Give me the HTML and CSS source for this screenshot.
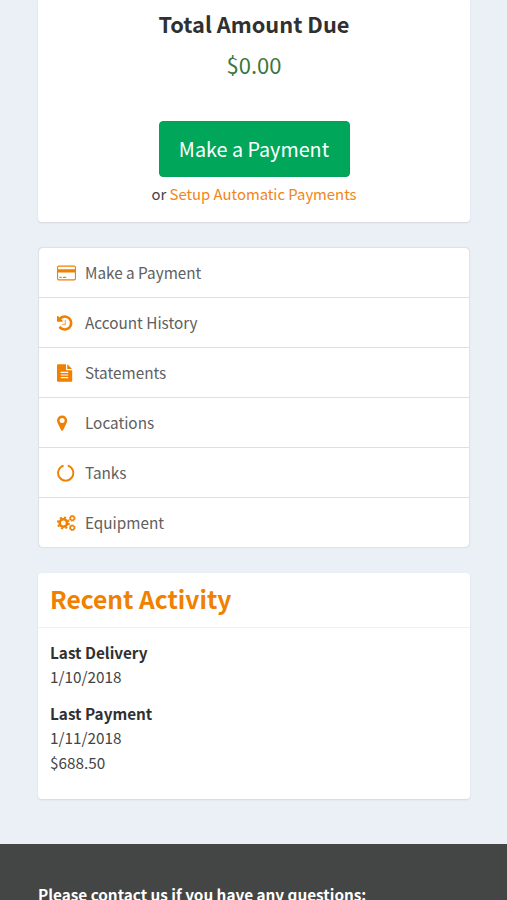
FILE: index.html
```html
<!DOCTYPE html>
<html lang="en">
<head>
<meta charset="utf-8">
<title>Account</title>
<link rel="stylesheet" href="styles.css">
</head>
<body>
<main class="content">
  <section class="card due">
    <h2 class="due-title">Total Amount Due</h2>
    <p class="due-amount">$0.00</p>
    <a class="pay-button"><span>Make a Payment</span></a>
    <p class="autopay">or <a class="link">Setup Automatic Payments</a></p>
  </section>
  <nav class="menu">
    <a class="item"><svg class="icon" viewBox="0 0 20 18"><path fill-rule="evenodd" d="M1.800 1.500h15.400a1.800 1.800 0 0 1 1.800 1.800v11.400a1.800 1.800 0 0 1-1.800 1.800H1.800a1.800 1.800 0 0 1-1.800-1.800V3.300a1.800 1.800 0 0 1 1.800-1.800zm0 1.200a.7.7 0 0 0-.7.8v1.700h16.800V3.500a.7.7 0 0 0-.7-.8zM1.100 8.500v6a.8.8 0 0 0 .8.8h15.200a.8.8 0 0 0 .8-.8v-6zM2.500 12.700h2.200v1.200H2.500zM6 12.700h3.200v1.200H6z"/></svg><span>Make a Payment</span></a>
    <a class="item"><svg class="icon" viewBox="128 0 1991 1792"><path d="M1664 896q0 156-61 298t-164 245-245 164-298 61q-172 0-327-72.500t-264-204.500q-7-10-6.500-22.500t8.500-20.500l137-138q10-9 25-9 16 2 23 12 73 95 179 147t225 52q104 0 198.500-40.500t163.500-109.500 109.500-163.500 40.500-198.500-40.500-198.500-109.500-163.500-163.500-109.500-198.500-40.500q-98 0-188 35.500t-160 101.500l137 138q31 30 14 69-17 40-59 40h-448q-26 0-45-19t-19-45v-448q0-42 40-59 39-17 69 14l130 129q107-101 244.500-156.500t284.500-55.500q156 0 298 61t245 164 164 245 61 298z"/><path class="hand" d="M1024 608v448q0 14-9 23t-23 9h-320q-14 0-23-9t-9-23v-64q0-14 9-23t23-9h224v-352q0-14 9-23t23-9h64q14 0 23 9t9 23z"/></svg><span>Account History</span></a>
    <a class="item"><svg class="icon" viewBox="0 0 20 18"><path fill-rule="evenodd" d="M1 .3h8v4.900a1 1 0 0 0 1 1h5.200v10.500a1 1 0 0 1-1 1H1a1 1 0 0 1-1-1V1.300a1 1 0 0 1 1-1zM3.700 7.800V9h7.500V7.800zm0 2.600v1.200h7.500v-1.200zm0 2.600v1.200h7.500V13z"/><path d="M10.200.4q.5.100.9.500l3.300 3.300q.4.400.5.900h-4.700z"/></svg><span>Statements</span></a>
    <a class="item"><svg class="icon" viewBox="0 0 20 18"><path fill-rule="evenodd" d="M5.100 1.500a5.100 5.100 0 0 1 5.100 5.100q0 1.200-.4 2L6.200 16a1.250 1.250 0 0 1-2.200 0L.4 8.600Q0 7.800 0 6.600a5.100 5.100 0 0 1 5.100-5.100zm0 2.600a2.500 2.500 0 1 0 0 5 2.500 2.500 0 0 0 0-5z"/></svg><span>Locations</span></a>
    <a class="item"><svg class="icon" viewBox="0 0 20 18"><path class="ring" d="M6.600 1.700A7.600 7.600 0 1 0 10.800 1.700"/></svg><span>Tanks</span></a>
    <a class="item"><svg class="icon" viewBox="0 0 20 18"><circle class="gear" cx="6.400" cy="9" r="3.700"/><circle class="teeth" cx="6.400" cy="9" r="5.600"/><circle class="gear-small" cx="15.300" cy="4.300" r="2"/><circle class="teeth-small" cx="15.300" cy="4.300" r="2.900"/><circle class="gear-small" cx="15.300" cy="13.700" r="2"/><circle class="teeth-small" cx="15.300" cy="13.700" r="2.900"/></svg><span>Equipment</span></a>
  </nav>
  <section class="card activity">
    <h2 class="activity-title">Recent Activity</h2>
    <dl class="activity-list">
      <dt>Last Delivery</dt>
      <dd>1/10/2018</dd>
      <dt>Last Payment</dt>
      <dd>1/11/2018</dd>
      <dd>$688.50</dd>
    </dl>
  </section>
</main>
<footer class="footer">Please contact us if you have any questions:</footer>
</body>
</html>
```
FILE: styles.css
```css
* { box-sizing: border-box; }
html { height: 100%; overflow: hidden; }
body {
  margin: 0;
  height: 900px;
  overflow: hidden;
  background: #ebeff6;
  color: #444;
  font: 15.3px/24.500px "Noto Sans CJK SC", sans-serif;
}
h2, p, dl, dd { margin: 0; }
.content { height: 844px; padding: 0 37px 0 38px; }
.card {
  background: #fff;
  border-radius: 4px;
  box-shadow: 0 1px 2px rgba(0, 0, 0, .1);
}
.due {
  height: 222px;
  display: flex;
  flex-direction: column;
  align-items: center;
  border-radius: 0 0 4px 4px;
}
.due-title {
  margin-top: 8px;
  font-size: 21.800px;
  line-height: 32px;
  color: #303030;
  white-space: nowrap;
}
.due-amount { margin-top: 8px; font-size: 22px; line-height: 32px; color: #3c763d; }
.pay-button {
  width: 191px;
  height: 56px;
  margin-top: 41px;
  display: flex;
  align-items: center;
  justify-content: center;
  background: #00a65a;
  border: 1px solid #06a05a;
  border-radius: 4px;
  color: #fff;
  font-size: 19.750px;
  white-space: nowrap;
}
.autopay { margin-top: 5px; font-size: 14.850px; white-space: nowrap; }
.link { color: #f08519; }
.menu {
  height: 301px;
  margin-top: 25px;
  display: grid;
  grid-template-rows: 50px repeat(4, 50.100px) 1fr;
  background: #fff;
  border: 1px solid #dfe2e6;
  border-radius: 5px;
  box-shadow: 0 0 1px rgba(0, 0, 0, .1);
}
.item {
  display: flex;
  align-items: center;
  padding-left: 18px;
  color: #606060;
  border-bottom: 1px solid #dde0e2;
}
.item span { line-height: 24px; padding-bottom: 2px; }
.item:last-child { border-bottom: 0; }
.icon { width: 20px; height: 18px; margin-right: 8px; fill: #f08000; }
.hand { opacity: .6; }
.ring { fill: none; stroke: #f08000; stroke-width: 1.900; }
.gear, .teeth, .gear-small, .teeth-small { fill: none; stroke: #f08000; }
.gear { stroke-width: 2.600; }
.teeth { stroke-width: 1.700; stroke-dasharray: 2.200 2.198; }
.gear-small { stroke-width: 1.400; }
.teeth-small { stroke-width: 1; stroke-dasharray: 1.200 1.078; }
.activity { height: 226px; margin-top: 25px; }
.activity-title {
  height: 55px;
  padding-left: 12px;
  border-bottom: 1px solid #f0f0f2;
  font-size: 24.600px;
  line-height: 50px;
  color: #f08000;
}
.activity-list { padding: 12px 12px; }
dt { font-weight: 700; line-height: 24.300px; color: #303030; }
dd { line-height: 24.300px; }
dd + dt { margin-top: 12.400px; }
.footer {
  height: 56px;
  padding: 38px 38px 0;
  overflow: hidden;
  background: #444645;
  color: #fff;
  font-weight: 700;
  white-space: nowrap;
}
```
